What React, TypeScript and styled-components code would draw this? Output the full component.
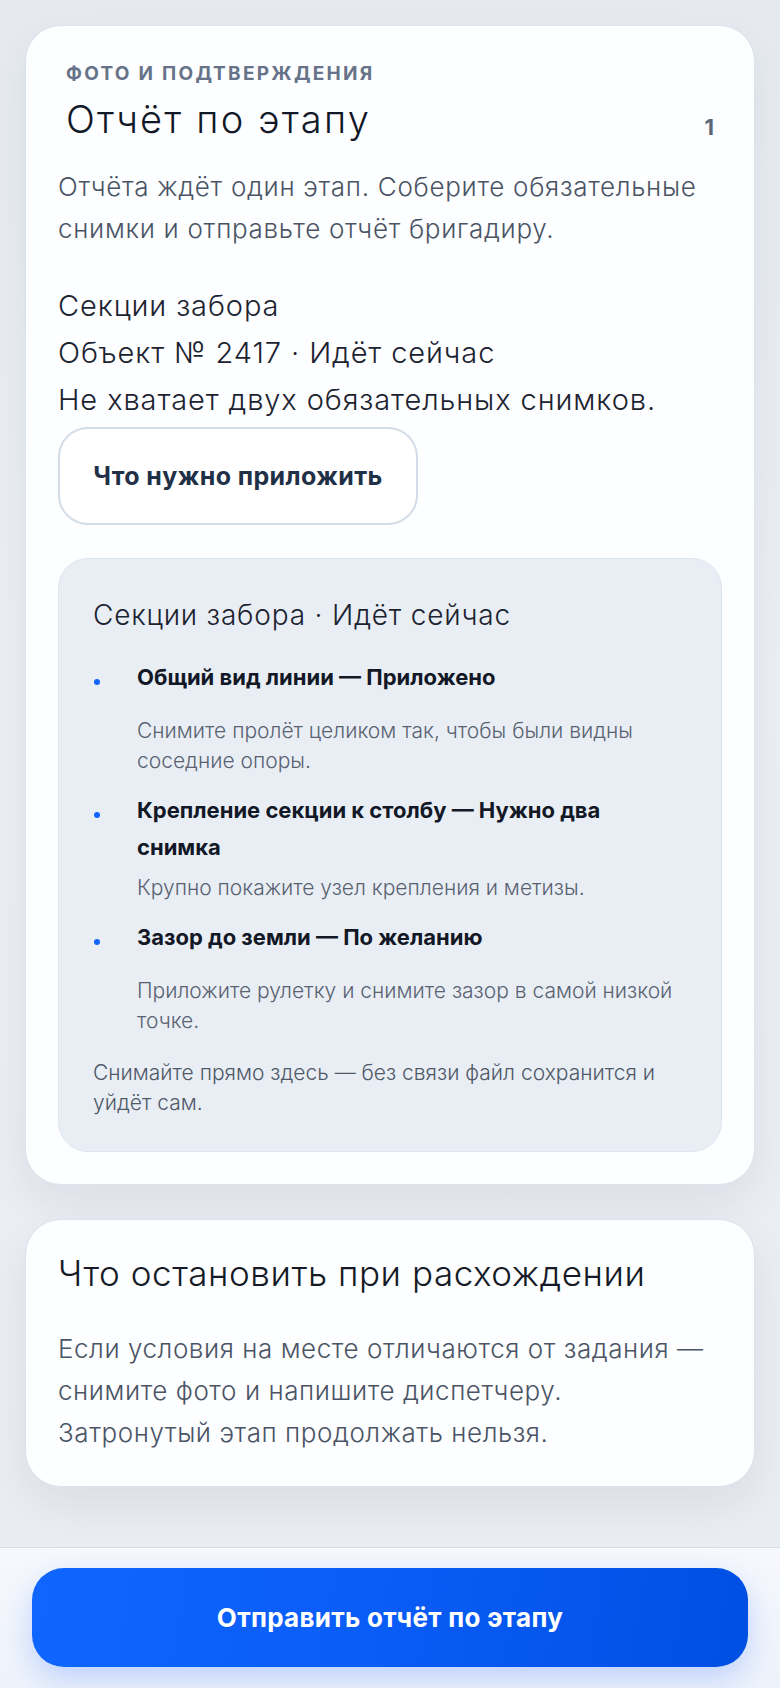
import React from "react";
import styled, { createGlobalStyle } from "styled-components";

const GlobalStyle = createGlobalStyle`
  *, *::before, *::after { box-sizing: border-box; }
  html, body { margin: 0; padding: 0; }
  body {
    background: #eceff4;
    font-family: Inter, "Noto Sans", "Liberation Sans", sans-serif;
    -webkit-font-smoothing: antialiased;
  }
`;

const Screen = styled.div`
  min-height: 100vh;
  display: flex;
  flex-direction: column;
  background: linear-gradient(180deg, #e6eaf0 0%, #eceff4 40%, #e9ecf1 100%);
`;

const Content = styled.main`
  display: flex;
  flex-direction: column;
  gap: 34px;
  padding: 25px 25px 40px 25px;
`;

const Card = styled.section<{ $tail?: number }>`
  display: flex;
  flex-direction: column;
  background: #fdfeff;
  border: 1px solid #dbe3eb;
  border-radius: 36px;
  padding: 32px 32px ${(p) => p.$tail ?? 32}px;
  box-shadow: 0 18px 44px rgba(30, 45, 70, 0.07);
`;

const CardHeader = styled.header`
  display: flex;
  align-items: flex-end;
  justify-content: space-between;
  padding: 4px 8px 0;
`;

const HeaderText = styled.div`
  display: flex;
  flex-direction: column;
`;

const Eyebrow = styled.div`
  font-size: 19px;
  font-weight: 700;
  letter-spacing: 0.12em;
  text-transform: uppercase;
  color: #667388;
  line-height: 24px;
`;

const Title = styled.h1`
  margin: 11px 0 0;
  font-size: 38px;
  font-weight: 300;
  letter-spacing: 2.2px;
  line-height: 44px;
  color: #111827;
`;

const Count = styled.span`
  font-size: 22px;
  font-weight: 700;
  line-height: 28px;
  color: #5b6676;
`;

const Lead = styled.p`
  margin: 25px 0 0;
  font-size: 26px;
  font-weight: 300;
  letter-spacing: 0.7px;
  line-height: 42px;
  color: #4a5465;
`;

const Facts = styled.div`
  margin-top: 32px;
  display: flex;
  flex-direction: column;
`;

const Fact = styled.p`
  margin: 0;
  font-size: 29px;
  font-weight: 300;
  letter-spacing: 0.9px;
  line-height: 47px;
  color: #1c2330;
`;

const OutlineButton = styled.button`
  align-self: flex-start;
  margin-top: 4px;
  width: 360px;
  height: 98px;
  border: 2px solid #d3dce7;
  border-radius: 30px;
  background: #ffffff;
  font-family: inherit;
  font-size: 25px;
  font-weight: 700;
  letter-spacing: 0.4px;
  color: #1f3047;
  cursor: pointer;
`;

const Panel = styled.div`
  margin-top: 33px;
  background: #e9eef5;
  border: 1px solid #dde5ee;
  border-radius: 30px;
  padding: 36px 34px 33px;
`;

const PanelTitle = styled.h3`
  margin: 0;
  font-size: 28px;
  font-weight: 300;
  letter-spacing: 0.8px;
  line-height: 40px;
  color: #1c2330;
`;

const List = styled.ul`
  margin: 24px 0 0;
  padding: 0 6px 0 0;
  list-style: none;
  display: flex;
  flex-direction: column;
  gap: 16px;
`;

const Item = styled.li`
  display: grid;
  grid-template-columns: 44px 1fr;
`;

const Dot = styled.span`
  width: 6px;
  height: 6px;
  margin: 20px 0 0 1px;
  border-radius: 50%;
  background: #1463ff;
`;

const ItemBody = styled.div`
  display: flex;
  flex-direction: column;
  gap: 7px;
`;

const ItemTitle = styled.div`
  max-width: 520px;
  min-height: 50px;
  font-size: 22px;
  font-weight: 700;
  line-height: 37px;
  color: #121826;
`;

const ItemText = styled.div`
  font-size: 21px;
  font-weight: 300;
  line-height: 30px;
  color: #596271;
`;

const Note = styled.p`
  margin: 22px 0 0;
  font-size: 21px;
  font-weight: 300;
  line-height: 30px;
  color: #4f5967;
`;

const SectionTitle = styled.h2`
  margin: 0;
  font-size: 35px;
  font-weight: 300;
  letter-spacing: 0.55px;
  line-height: 42px;
  color: #151b26;
`;

const Body = styled.div`
  margin-top: 34px;
  display: flex;
  flex-direction: column;
`;

const BodyLine = styled.p`
  margin: 0;
  font-size: 26px;
  font-weight: 300;
  letter-spacing: 0.55px;
  line-height: 42px;
  color: #4a5465;
`;

const ActionBar = styled.footer`
  margin-top: auto;
  border-top: 1px solid #d8dee6;
  background: linear-gradient(180deg, #f6f8fc 0%, #eef3fb 100%);
  padding: 20px 32px 21px;
`;

const PrimaryButton = styled.button`
  width: 100%;
  height: 99px;
  border: none;
  border-radius: 32px;
  background: linear-gradient(100deg, #0f66ff 0%, #0a5cf6 50%, #004fe3 100%);
  box-shadow: 0 12px 30px rgba(17, 92, 255, 0.22);
  color: #ffffff;
  font-family: inherit;
  font-size: 26px;
  font-weight: 700;
  letter-spacing: 0.3px;
  cursor: pointer;
`;

type Shot = { title: string; hint: string };

const shots: Shot[] = [
  {
    title: "Общий вид линии — Приложено",
    hint: "Снимите пролёт целиком так, чтобы были видны соседние опоры.",
  },
  {
    title: "Крепление секции к столбу — Нужно два снимка",
    hint: "Крупно покажите узел крепления и метизы.",
  },
  {
    title: "Зазор до земли — По желанию",
    hint: "Приложите рулетку и снимите зазор в самой низкой точке.",
  },
];

export default function App() {
  return (
    <>
      <GlobalStyle />
      <Screen>
        <Content>
          <Card $tail={32}>
            <CardHeader>
              <HeaderText>
                <Eyebrow>Фото и подтверждения</Eyebrow>
                <Title>Отчёт по этапу</Title>
              </HeaderText>
              <Count>1</Count>
            </CardHeader>
            <Lead>
              Отчёта ждёт один этап. Соберите обязательные снимки и отправьте
              отчёт бригадиру.
            </Lead>
            <Facts>
              <Fact>Секции забора</Fact>
              <Fact>Объект № 2417 · Идёт сейчас</Fact>
              <Fact>Не хватает двух обязательных снимков.</Fact>
            </Facts>
            <OutlineButton type="button">Что нужно приложить</OutlineButton>
            <Panel>
              <PanelTitle>Секции забора · Идёт сейчас</PanelTitle>
              <List>
                {shots.map((s) => (
                  <Item key={s.title}>
                    <Dot />
                    <ItemBody>
                      <ItemTitle>{s.title}</ItemTitle>
                      <ItemText>{s.hint}</ItemText>
                    </ItemBody>
                  </Item>
                ))}
              </List>
              <Note>
                Снимайте прямо здесь — без связи файл сохранится и уйдёт сам.
              </Note>
            </Panel>
          </Card>
          <Card>
            <SectionTitle>Что остановить при расхождении</SectionTitle>
            <Body>
              <BodyLine>
                Если условия на месте отличаются от задания — снимите фото и
                напишите диспетчеру.
              </BodyLine>
              <BodyLine>Затронутый этап продолжать нельзя.</BodyLine>
            </Body>
          </Card>
        </Content>
        <ActionBar>
          <PrimaryButton type="button">Отправить отчёт по этапу</PrimaryButton>
        </ActionBar>
      </Screen>
    </>
  );
}
